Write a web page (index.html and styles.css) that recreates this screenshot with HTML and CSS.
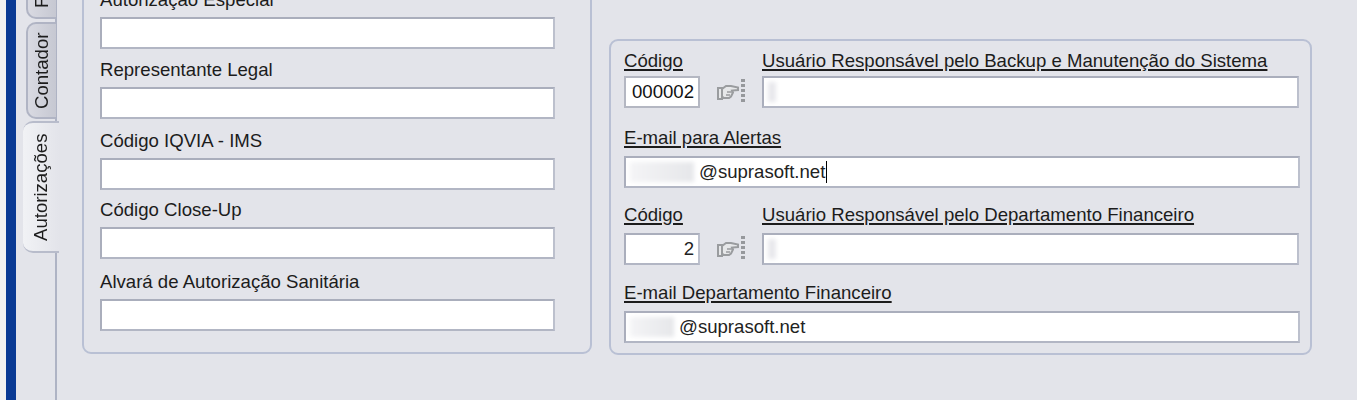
FILE: index.html
```html
<!DOCTYPE html>
<html lang="pt-BR">
<head>
    <meta charset="UTF-8">
    <meta name="viewport" content="width=device-width, initial-scale=1.0">
    <title>Autorizações</title>
    <link rel="stylesheet" href="styles.css">
</head>

<body>
    <div class="window">
        <div class="tabs">
            <div class="tab tab-cut">F</div>
            <div class="tab">Contador</div>
            <div class="tab tab-active">Autorizações</div>
        </div>

        <div class="content">
            <div class="panel panel-left">
                <div class="row">
                    <div class="label">Autorização Especial</div>
                    <div class="field"></div>
                </div>
                <div class="row">
                    <div class="label">Representante Legal</div>
                    <div class="field"></div>
                </div>
                <div class="row">
                    <div class="label">Código IQVIA - IMS</div>
                    <div class="field"></div>
                </div>
                <div class="row">
                    <div class="label">Código Close-Up</div>
                    <div class="field"></div>
                </div>
                <div class="row">
                    <div class="label">Alvará de Autorização Sanitária</div>
                    <div class="field"></div>
                </div>
            </div>

            <div class="panel panel-right">
                <div class="lookup">
                    <div class="lookup-code">
                        <div class="label label-link label-short">Código</div>
                        <div class="field field-num field-sharp">000002</div>
                    </div>
                    <svg class="hand" viewBox="0 0 28 26" width="28" height="26">
                        <path d="M1 10h4v11H1zM5 11l4-3h5l7 1.500v2.500l-6 .5 1 2-1 2-1 2-2 1.500H7l-2-1.500z" fill="#e6e7e9" stroke="#9a9c9f" stroke-width="2"/>
                        <path d="M10 14h5M9 17h4" stroke="#9a9c9f" stroke-width="1.500"/>
                        <path d="M26 1v24" stroke="#96989c" stroke-width="4" stroke-dasharray="3 2"/>
                    </svg>
                    <div class="lookup-name">
                        <div class="label label-link label-short">Usuário Responsável pelo Backup e Manutenção do Sistema</div>
                        <div class="field"><span class="smudge smudge-small"></span></div>
                    </div>
                </div>

                <div class="label label-link">E-mail para Alertas</div>
                <div class="field field-mail">
                    <span class="smudge smudge-wide"></span><span class="caret">@suprasoft.net</span>
                </div>

                <div class="lookup lookup-second">
                    <div class="lookup-code">
                        <div class="label label-link">Código</div>
                        <div class="field field-num">2</div>
                    </div>
                    <svg class="hand" viewBox="0 0 28 26" width="28" height="26">
                        <path d="M1 10h4v11H1zM5 11l4-3h5l7 1.500v2.500l-6 .5 1 2-1 2-1 2-2 1.500H7l-2-1.500z" fill="#e6e7e9" stroke="#9a9c9f" stroke-width="2"/>
                        <path d="M10 14h5M9 17h4" stroke="#9a9c9f" stroke-width="1.500"/>
                        <path d="M26 1v24" stroke="#96989c" stroke-width="4" stroke-dasharray="3 2"/>
                    </svg>
                    <div class="lookup-name">
                        <div class="label label-link">Usuário Responsável pelo Departamento Financeiro</div>
                        <div class="field"><span class="smudge smudge-small"></span></div>
                    </div>
                </div>

                <div class="label label-link">E-mail Departamento Financeiro</div>
                <div class="field field-mail">
                    <span class="smudge smudge-mid"></span>@suprasoft.net
                </div>
            </div>
        </div>
    </div>
</body>

</html>
```

FILE: styles.css
```css
* {
    box-sizing: border-box;
}

html,
body {
    margin: 0;
    height: 400px;
    overflow: hidden;
    background: #f1f1f1;
}

.window {
    display: flex;
    height: 400px;
    margin-left: 6px;
    border-left: 10px solid #0a3a94;
    background: #e3e4ea;
    font-family: "Liberation Sans", Arial, sans-serif;
    font-size: 18.6px;
    color: #1c1c1c;
}

.tabs {
    display: flex;
    flex-direction: column;
    flex: none;
    width: 41px;
    padding-left: 10px;
    border-right: 2px solid #aeb3c4;
    margin-top: -30px;
    height: 430px;
}

.tab {
    writing-mode: vertical-rl;
    transform: rotate(180deg);
    display: flex;
    align-items: center;
    justify-content: center;
    flex: none;
    width: 30px;
    height: 97px;
    border: 2px solid #b0b4c4;
    border-left: none;
    border-radius: 0 10px 10px 0;
    background: linear-gradient(to left, #d9dae2, #c6c8d2);
}

.tab-cut {
    height: 49px;
    justify-content: flex-start;
    padding-top: 9px;
    margin-bottom: 3px;
}

.tab-active {
    position: relative;
    width: 36px;
    height: 132px;
    margin: 2px -3px 0 -3px;
    background: linear-gradient(to left, #f1f2f5, #e3e4ea);
    border-color: #b8bccb;
    border-right: none;
}

.content {
    display: flex;
    align-items: flex-start;
    flex: 1;
    padding-left: 25px;
}

.panel {
    border: 2px solid #b9c0d4;
    border-radius: 9px;
}

.panel-left {
    width: 510px;
    height: 400px;
    margin-top: -46px;
    padding: 32px 35px 0 16px;
    flex: none;
}

.panel-right {
    width: 703px;
    height: 316px;
    margin: 39px 0 0 17px;
    padding: 10px 10px 0 13px;
    flex: none;
}

.row {
    margin-bottom: 9px;
}

.row:nth-child(2) {
    margin-bottom: 10px;
}

.row:nth-child(3) {
    margin-bottom: 8px;
}

.row:nth-child(4) {
    margin-bottom: 11px;
}

.label {
    height: 29px;
    line-height: 24px;
    white-space: nowrap;
}

.label-link {
    height: 28px;
    line-height: 19px;
    text-decoration: underline;
    text-decoration-thickness: 1.5px;
    text-underline-offset: 2px;
}

.label-short {
    height: 25px;
}

.field {
    display: flex;
    align-items: center;
    height: 32px;
    padding: 0 4px;
    background: #fff;
    border: 2px solid;
    border-color: #aaaebc #bcc0cd #b2b6c4 #aaaebc;
    white-space: nowrap;
    color: #222;
}

.lookup {
    display: flex;
    align-items: flex-end;
    margin-bottom: 20px;
}

.lookup-second {
    margin: 17px 0 18px;
}

.lookup-code {
    width: 76px;
    flex: none;
}

.lookup-name {
    width: 537px;
    flex: none;
}

.field-num {
    justify-content: flex-end;
}

.field-sharp {
    border-color: #b4b7c2;
    color: #111;
}

.field-mail {
    width: 676px;
}

.hand {
    flex: none;
    margin: 0 17px 4px 17px;
}

.smudge {
    display: block;
    flex: none;
    height: 20px;
    background: linear-gradient(to right, #f4f4f6, #e6e7ea);
    filter: blur(2px);
}

.smudge-small {
    width: 8px;
    background: #e8e8ec;
}

.smudge-wide {
    width: 64px;
    margin-right: 5px;
}

.smudge-mid {
    width: 44px;
    margin-right: 5px;
}

.caret {
    padding-right: 1px;
    border-right: 1px solid #000;
    line-height: 22px;
}
```
